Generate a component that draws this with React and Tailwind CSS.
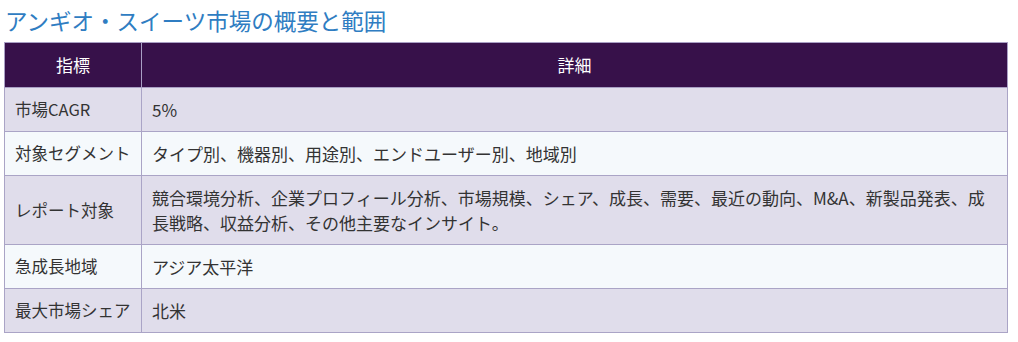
import React from "react";

const rows = [
  ["市場CAGR", "5%"],
  ["対象セグメント", "タイプ別、機器別、用途別、エンドユーザー別、地域別"],
  [
    "レポート対象",
    "競合環境分析、企業プロフィール分析、市場規模、シェア、成長、需要、最近の動向、M&A、新製品発表、成長戦略、収益分析、その他主要なインサイト。",
  ],
  ["急成長地域", "アジア太平洋"],
  ["最大市場シェア", "北米"],
];

const App = () => {
  return (
    <div
      className="w-[1018px] h-[342px] bg-white overflow-hidden"
      style={{ fontFamily: '"Noto Sans CJK JP", "Noto Sans", sans-serif' }}
    >
      {/* Title */}
      <h2 className="pl-[5px] pt-[2px] h-[42px] text-[22.5px] leading-[36px] text-[#2f7dc2] font-normal">
        アンギオ・スイーツ市場の概要と範囲
      </h2>

      {/* Table */}
      <table className="ml-[4px] w-[1004px] table-fixed border-collapse text-[17px] text-[#333]">
        <colgroup>
          <col className="w-[137px]" />
          <col />
        </colgroup>
        <thead>
          <tr className="bg-[#37114a] text-white h-[45px]">
            <th className="border border-[#a99fc4] font-normal text-center">指標</th>
            <th className="border border-[#a99fc4] font-normal text-center">詳細</th>
          </tr>
        </thead>
        <tbody>
          {rows.map(([label, value], i) => (
            <tr key={label} className={i % 2 === 0 ? "bg-[#e0ddeb]" : "bg-[#f5f9fc]"}>
              <td className="border border-[#aaa4c6] pl-[10px] pr-0 py-[9px] leading-[25px] align-middle whitespace-nowrap text-[16.5px]">
                {label}
              </td>
              <td className="border border-[#aaa4c6] px-[10px] py-[9px] leading-[25px] align-middle">
                {value}
              </td>
            </tr>
          ))}
        </tbody>
      </table>
    </div>
  );
};

export default App;
